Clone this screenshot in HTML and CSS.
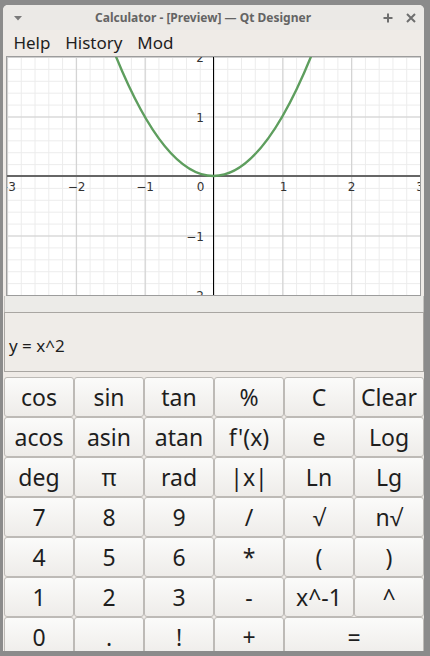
FILE: index.html
```html
<!DOCTYPE html>
<html>
<head>
<meta charset="utf-8">
<link rel="stylesheet" href="styles.css">
</head>
<body>
<div class="window">
  <div class="titlebar">
    <span class="tb-left"><svg width="8" height="5" viewBox="0 0 8 5"><polygon points="0,0 8,0 4,4.5" fill="#7a7a7a"/></svg></span>
    <span class="title">Calculator - [Preview] — Qt Designer</span>
    <span class="tb-right">
      <svg width="10" height="10" viewBox="0 0 10 10"><path d="M5 0.5V9.5M0.5 5H9.5" stroke="#6e6e6e" stroke-width="2"/></svg>
      <svg width="10" height="10" viewBox="0 0 10 10"><path d="M1 1L9 9M9 1L1 9" stroke="#6e6e6e" stroke-width="2"/></svg>
    </span>
  </div>
  <div class="menubar"><span class="mi">Help</span><span class="mi">History</span><span class="mi">Mod</span></div>
  <div class="plot">
    <svg width="413" height="238" viewBox="0 0 413 238">
      <defs>
        <pattern id="minor" patternUnits="userSpaceOnUse" x="206.5" y="119" width="13.766" height="11.9">
          <path d="M0.5 0V11.9M0 0.5H13.766" stroke="#ececec" stroke-width="1" fill="none"/>
        </pattern>
        <pattern id="major" patternUnits="userSpaceOnUse" x="206.5" y="119" width="68.83" height="59.5">
          <path d="M0.5 0V59.5M0 0.5H68.83" stroke="#cfcfcf" stroke-width="1.2" fill="none"/>
        </pattern>
      </defs>
      <rect width="413" height="238" fill="#fff"/>
      <rect width="413" height="238" fill="url(#minor)"/>
      <rect width="413" height="238" fill="url(#major)"/>
      <line x1="0" y1="119" x2="413" y2="119" stroke="#666" stroke-width="2"/>
      <line x1="206.5" y1="0" x2="206.5" y2="238" stroke="#000" stroke-width="1"/>
      <path d="M103.25 -14.875 Q206.5 252.875 309.75 -14.875" stroke="#5e9e5e" stroke-width="2.4" fill="none"/>
      <g class="lbl" text-anchor="middle">
        <text x="0" y="134">−3</text>
        <text x="69.5" y="134">−2</text>
        <text x="138" y="134">−1</text>
        <text x="193.5" y="134">0</text>
        <text x="276.5" y="134">1</text>
        <text x="344.5" y="134">2</text>
        <text x="413" y="134">3</text>
      </g>
      <g class="lbl" text-anchor="end">
        <text x="197" y="4.5">2</text>
        <text x="197" y="64.5">1</text>
        <text x="197" y="183.5">−1</text>
        <text x="197" y="243">−2</text>
      </g>
    </svg>
  </div>
  <div class="strip"></div>
  <div class="expr">y = x^2</div>
  <div class="keys">
    <button class="key">cos</button><button class="key">sin</button><button class="key">tan</button><button class="key">%</button><button class="key">C</button><button class="key">Clear</button>
    <button class="key">acos</button><button class="key">asin</button><button class="key">atan</button><button class="key">f'(x)</button><button class="key">e</button><button class="key">Log</button>
    <button class="key">deg</button><button class="key">π</button><button class="key">rad</button><button class="key">|x|</button><button class="key">Ln</button><button class="key">Lg</button>
    <button class="key">7</button><button class="key">8</button><button class="key">9</button><button class="key">/</button><button class="key">√</button><button class="key">n√</button>
    <button class="key">4</button><button class="key">5</button><button class="key">6</button><button class="key">*</button><button class="key">(</button><button class="key">)</button>
    <button class="key">1</button><button class="key">2</button><button class="key">3</button><button class="key">-</button><button class="key">x^-1</button><button class="key">^</button>
    <button class="key">0</button><button class="key">.</button><button class="key">!</button><button class="key">+</button><button class="key wide">=</button>
  </div>
</div>
</body>
</html>
```
FILE: styles.css
```css
html, body {
  margin: 0;
  padding: 0;
}
body {
  background: #8b8b8b;
  width: 430px;
  height: 656px;
  overflow: hidden;
  font-family: "Noto Sans", "Open Sans", sans-serif;
  padding-top: 5px;
  box-sizing: border-box;
}
.window {
  margin-left: 3px;
  width: 421px;
  height: 646px;
  background: #efebe7;
  border-radius: 5px 5px 0 0;
  overflow: hidden;
  display: flex;
  flex-direction: column;
}
.titlebar {
  height: 25px;
  flex: none;
  display: flex;
  align-items: center;
  background: #ebe9e6;
}
.tb-left {
  width: 23px;
  display: flex;
  justify-content: flex-end;
  align-items: center;
  padding-top: 1px;
}
.tb-left svg { margin-right: 4px; }
.title {
  flex: 1;
  text-align: center;
  font-weight: bold;
  font-size: 12px;
  color: #646464;
}
.tb-right {
  width: 44px;
  display: flex;
  gap: 13px;
  align-items: center;
  padding-left: 3px;
  box-sizing: border-box;
}
.menubar {
  height: 26px;
  flex: none;
  display: flex;
  align-items: center;
  padding-left: 3px;
  font-size: 17px;
  color: #1e1e1e;
  background: #efebe7;
}
.mi {
  padding: 0 7.4px;
  line-height: 26px;
}
.plot {
  flex: none;
  margin-left: 3px;
  width: 413px;
  height: 238px;
  border: 1px solid #9c9c9c;
  background: #fff;
}
.plot svg { display: block; }
.lbl text {
  font-family: "DejaVu Sans", sans-serif;
  font-size: 12px;
  fill: #333;
}
.strip {
  flex: none;
  height: 16px;
  margin-left: 1px;
  width: 418px;
  background: #ecebe8;
  border-left: 1px solid #c4c2bf;
  border-right: 1px solid #c4c2bf;
}
.expr {
  flex: none;
  height: 52px;
  margin-left: 1px;
  width: 414px;
  border: 1px solid #a9a6a2;
  background: #efece8;
  font-size: 17px;
  color: #1e1e1e;
  display: flex;
  align-items: center;
  padding-left: 4px;
  padding-top: 6px;
}
.keys {
  flex: none;
  margin-top: 5px;
  margin-left: 1px;
  display: grid;
  grid-template-columns: repeat(6, 70px);
  grid-auto-rows: 40px;
}
.key {
  margin: 0;
  padding: 0;
  border: 1px solid #bdbab6;
  border-radius: 3px;
  background: linear-gradient(#fbfbfa, #eeece9);
  font-family: "Noto Sans", "Open Sans", sans-serif;
  font-size: 23px;
  color: #1e1e1e;
  line-height: 1;
}
.wide {
  grid-column: span 2;
}
```
